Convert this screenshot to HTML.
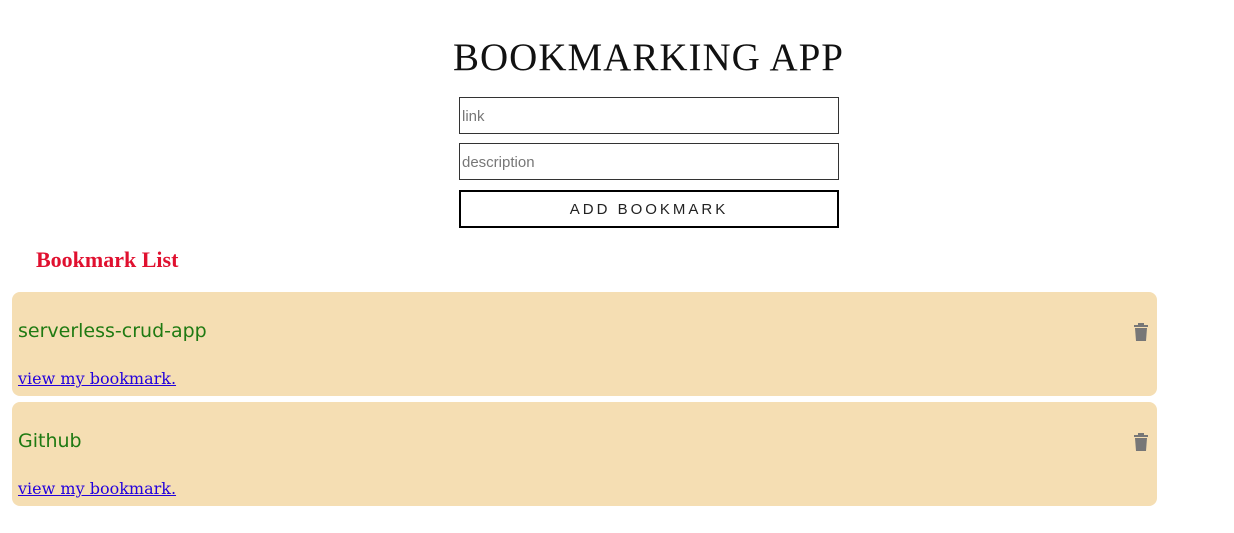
<!DOCTYPE html>
<html><head><style>
body{margin:0;width:1234px;height:533px;background:#fff;position:relative;font-family:"Liberation Sans",sans-serif;overflow:hidden}
.abs{position:absolute}
h1{position:absolute;margin:0;left:0;width:1297px;text-align:center;top:35px;font:400 39px "Liberation Serif",serif;letter-spacing:1px;color:#111}
.inp{position:absolute;left:459px;width:376px;height:35px;border:1px solid #333;box-sizing:content-box;color:#777;font-size:15px;line-height:37px;padding-left:2px;box-sizing:border-box;width:380px;height:37px}
.btn{position:absolute;left:459px;top:190px;width:376px;height:34px;border:2px solid #000;text-align:center;line-height:36px;font-size:15px;letter-spacing:3px;color:#222}
.hl{left:36px;top:247px;font:bold 22px "Liberation Serif",serif;color:#e0102f}
.card{position:absolute;left:12px;width:1145px;height:104px;background:#f5deb3;border-radius:8px}
.t{position:absolute;left:6px;top:28px;font:19px "DejaVu Sans",sans-serif;color:#1f7a12}
.l{position:absolute;left:6px;top:77px;font:16px "DejaVu Serif","Liberation Serif",serif;color:#2200dd;text-decoration:underline}
.trash{position:absolute;left:1122px;top:31px}
</style></head><body>
<h1>BOOKMARKING APP</h1>
<div class="inp" style="top:97px">link</div>
<div class="inp" style="top:143px">description</div>
<div class="btn">ADD BOOKMARK</div>
<div class="abs hl">Bookmark List</div>
<div class="card" style="top:292px"><div class="t">serverless-crud-app</div><div class="l">view my bookmark.</div>
<svg class="trash" width="14" height="18" viewBox="0 0 14 18"><rect x="0" y="2" width="14" height="2" fill="#777"/><rect x="4" y="0" width="6" height="3" fill="#777"/><path d="M1 5h12l-1 13H2z" fill="#777"/></svg></div>
<div class="card" style="top:402px"><div class="t">Github</div><div class="l">view my bookmark.</div>
<svg class="trash" width="14" height="18" viewBox="0 0 14 18"><rect x="0" y="2" width="14" height="2" fill="#777"/><rect x="4" y="0" width="6" height="3" fill="#777"/><path d="M1 5h12l-1 13H2z" fill="#777"/></svg></div>
</body></html>
